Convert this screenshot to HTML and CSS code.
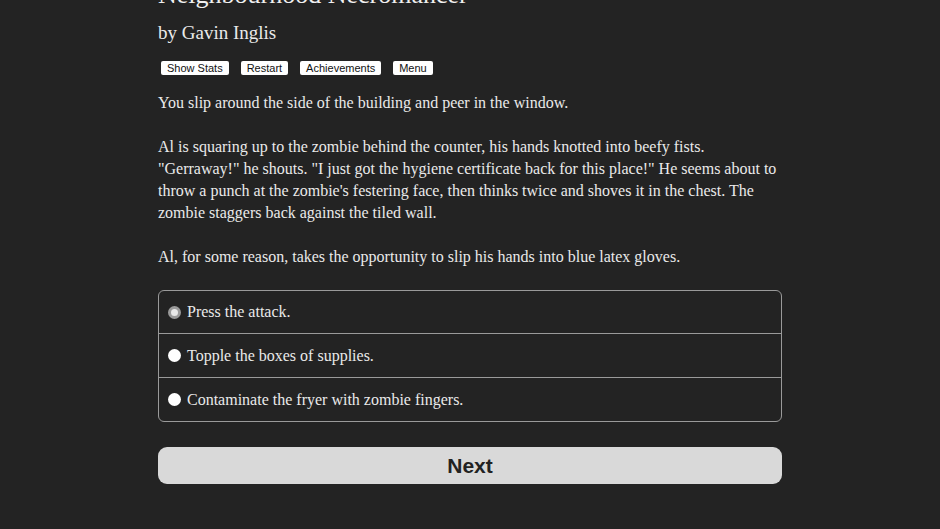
FILE: index.html
```html
<!DOCTYPE html>
<html>
<head>
<meta charset="utf-8">
<link rel="stylesheet" href="styles.css">
</head>
<body>
<div class="page">
  <h1 class="title">Neighbourhood Necromancer</h1>
  <h2 class="author">by Gavin Inglis</h2>
  <div class="buttons">
    <button class="sbtn">Show Stats</button>
    <button class="sbtn">Restart</button>
    <button class="sbtn">Achievements</button>
    <button class="sbtn">Menu</button>
  </div>
  <div class="text">
    <p>You slip around the side of the building and peer in the window.</p>
    <p>Al is squaring up to the zombie behind the counter, his hands knotted into beefy fists. "Gerraway!" he shouts. "I just got the hygiene certificate back for this place!" He seems about to throw a punch at the zombie's festering face, then thinks twice and shoves it in the chest. The zombie staggers back against the tiled wall.</p>
    <p>Al, for some reason, takes the opportunity to slip his hands into blue latex gloves.</p>
  </div>
  <div class="choices">
    <label class="choice"><span class="radio checked"></span>Press the attack.</label>
    <label class="choice"><span class="radio"></span>Topple the boxes of supplies.</label>
    <label class="choice"><span class="radio"></span>Contaminate the fryer with zombie fingers.</label>
  </div>
  <button class="next">Next</button>
</div>
</body>
</html>
```
FILE: styles.css
```css
html, body {
  margin: 0;
  padding: 0;
  background: #232323;
  height: 100%;
  overflow: hidden;
}
.page {
  width: 624px;
  margin: 0 auto;
  color: #eaeaea;
  font-family: "Liberation Serif", "DejaVu Serif", serif;
}
.title {
  font-size: 26px;
  font-weight: normal;
  margin: -20px 0 0 0;
  line-height: 30px;
  color: #f0f0f0;
}
.author {
  font-size: 19px;
  font-weight: normal;
  margin: 12px 0 0 0;
  line-height: 22px;
}
.buttons {
  display: flex;
  gap: 12px;
  margin: 17px 0 0 3px;
}
.sbtn {
  font-family: "Liberation Sans", Arial, sans-serif;
  font-size: 11px;
  background: #fff;
  color: #111;
  border: none;
  border-radius: 2px;
  padding: 0 6px;
  height: 14px;
  line-height: 14px;
}
.text {
  margin-top: 17px;
  font-size: 16px;
  line-height: 22px;
}
.text p {
  margin: 0 0 22px 0;
}
.choices {
  border: 1px solid #9a9a9a;
  border-radius: 6px;
  margin-top: 16px;
}
.choice {
  display: flex;
  align-items: center;
  height: 43px;
  font-size: 16px;
  padding-left: 9px;
  border-top: 1px solid #9a9a9a;
}
.choice:first-child {
  border-top: none;
  height: 42px;
}
.radio {
  width: 13px;
  height: 13px;
  border-radius: 50%;
  background: #fff;
  margin-right: 6px;
  box-sizing: border-box;
}
.radio.checked {
  border: 3.5px solid #9a9a9a;
  background: #e8e8e8;
}
.next {
  display: block;
  width: 100%;
  margin-top: 25px;
  height: 37px;
  background: #d9d9d9;
  border: none;
  border-radius: 9px;
  font-family: "Liberation Sans", Arial, sans-serif;
  font-weight: bold;
  font-size: 21px;
  color: #222;
}
```
